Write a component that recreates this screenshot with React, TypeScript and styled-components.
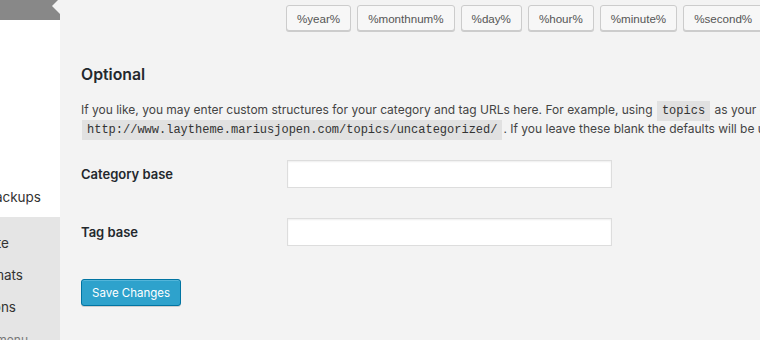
import styled, { createGlobalStyle } from 'styled-components';

const GlobalStyle = createGlobalStyle`
  html, body {
    margin: 0;
    padding: 0;
    height: 100%;
    overflow: hidden;
    background: #f3f3f3;
  }
  body {
    font-family: Inter, "Liberation Sans", Arial, sans-serif;
    font-size: 12px;
    color: #444;
  }
`;

const Page = styled.div`
  display: flex;
  width: 760px;
  height: 340px;
  overflow: hidden;
`;

const Sidebar = styled.nav`
  display: flex;
  flex-direction: column;
  width: 60px;
  flex-shrink: 0;
  overflow: hidden;
`;

const CurrentBar = styled.div`
  position: relative;
  flex-shrink: 0;
  height: 20px;
  background: #888888;
  &::after {
    content: '';
    position: absolute;
    right: 0;
    top: -2px;
    border-right: 8px solid #f3f3f3;
    border-top: 8px solid transparent;
    border-bottom: 8px solid transparent;
  }
`;

const SubMenu = styled.div`
  display: flex;
  flex-direction: column;
  justify-content: flex-end;
  flex-shrink: 0;
  height: 197px;
  padding-bottom: 4px;
  box-sizing: border-box;
  background: #fff;
`;

const OtherMenu = styled.div`
  flex: 1;
  min-height: 0;
  display: flex;
  flex-direction: column;
  padding-top: 10px;
  background: #e5e5e5;
  overflow: hidden;
`;

const SideItem = styled.div<{ $end: number; $muted?: boolean }>`
  display: flex;
  justify-content: flex-end;
  align-items: center;
  flex-shrink: 0;
  height: 32px;
  padding-right: ${(p) => 60 - p.$end}px;
  overflow: hidden;
  white-space: nowrap;
  font-size: ${(p) => (p.$muted ? '12px' : '13.5px')};
  color: ${(p) => (p.$muted ? '#777' : '#333')};
`;

const Main = styled.main`
  flex: 1;
  min-width: 0;
  padding: 5px 0 0 21px;
  background: #f3f3f3;
  overflow: hidden;
`;

const TagList = styled.div`
  display: flex;
  gap: 6px;
  margin-left: 205px;
  white-space: nowrap;
`;

const TagButton = styled.button`
  height: 26px;
  padding: 0 10px;
  flex-shrink: 0;
  font-family: "Liberation Sans", Arial, sans-serif;
  font-size: 11.6px;
  color: #555;
  background: #f7f7f7;
  border: 1px solid #cccccc;
  border-radius: 3px;
  box-shadow: 0 1px 0 #cccccc;
`;

const Heading = styled.h2`
  margin: 33px 0 0;
  font-size: 15.8px;
  line-height: 22px;
  font-weight: 600;
  color: #23282d;
`;

const Intro = styled.p`
  margin: 14px 0 0;
  line-height: 19px;
  white-space: nowrap;
  color: #444;
`;

const Code = styled.code`
  font-family: "Liberation Mono", "DejaVu Sans Mono", monospace;
  font-size: 12px;
  line-height: 1;
  padding: 3px 5px 3px;
  margin: 0 1px;
  background: rgba(0, 0, 0, 0.07);
  color: #333;
`;

const FormTable = styled.div`
  display: grid;
  grid-template-columns: 206px 325px;
  row-gap: 30px;
  align-items: center;
  margin-top: 22px;
`;

const Label = styled.label`
  font-size: 13px;
  font-weight: 600;
  color: #23282d;
`;

const TextInput = styled.input`
  height: 28px;
  box-sizing: border-box;
  border: 1px solid #dddddd;
  background: #fff;
  box-shadow: inset 0 1px 2px rgba(0, 0, 0, 0.07);
  outline: none;
`;

const PrimaryButton = styled.button`
  margin-top: 33px;
  height: 27px;
  padding: 0 10px;
  font-family: inherit;
  font-size: 11.5px;
  color: #fff;
  background: #2ea2cc;
  border: 1px solid #0074a2;
  border-radius: 3px;
  box-shadow: inset 0 1px 0 rgba(120, 200, 230, 0.5), 0 1px 0 rgba(0, 0, 0, 0.15);
`;

const tags = ['%year%', '%monthnum%', '%day%', '%hour%', '%minute%', '%second%', '%post_id%'];

const App = () => (
  <>
    <GlobalStyle />
    <Page>
      <Sidebar>
        <CurrentBar />
        <SubMenu>
          <SideItem $end={41}>Backups</SideItem>
        </SubMenu>
        <OtherMenu>
          <SideItem $end={9}>Update</SideItem>
          <SideItem $end={23}>Formats</SideItem>
          <SideItem $end={16}>Options</SideItem>
          <SideItem $end={28} $muted>Collapse menu</SideItem>
        </OtherMenu>
      </Sidebar>
      <Main>
        <TagList>
          {tags.map((t) => (
            <TagButton key={t}>{t}</TagButton>
          ))}
        </TagList>
        <Heading>Optional</Heading>
        <Intro>
          If you like, you may enter custom structures for your category and tag URLs here. For example, using{' '}
          <Code>topics</Code> as your category base would make your category links like
          <br />
          <Code>http://www.laytheme.mariusjopen.com/topics/uncategorized/</Code>. If you leave these blank the defaults
          will be used.
        </Intro>
        <FormTable>
          <Label htmlFor="category_base">Category base</Label>
          <TextInput id="category_base" type="text" />
          <Label htmlFor="tag_base">Tag base</Label>
          <TextInput id="tag_base" type="text" />
        </FormTable>
        <PrimaryButton>Save Changes</PrimaryButton>
      </Main>
    </Page>
  </>
);

export default App;
